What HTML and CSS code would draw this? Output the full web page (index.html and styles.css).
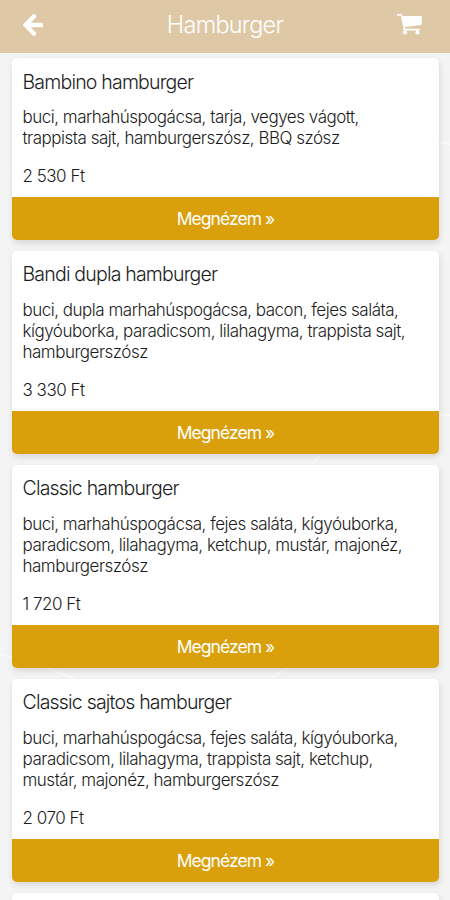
FILE: index.html
```
<!DOCTYPE html>
<html lang="hu">
<head>
<meta charset="utf-8">
<meta name="viewport" content="width=device-width, initial-scale=1">
<title>Hamburger</title>
<link rel="stylesheet" href="styles.css">
</head>
<body>
<header class="bar">
  <svg class="back" viewBox="0 0 20 22"><path d="M11 2.400 2.500 11l8.500 8.600M4 11h14.500" fill="none" stroke="#fff" stroke-width="4.400" stroke-linecap="round"/></svg>
  <h1>Hamburger</h1>
  <svg class="cart" viewBox="0 0 25 21"><path d="M.8 0H4q1 0 1.200.8l.2 1.200H24q.8 0 .8.8V10q0 .8-.8.900L8 13l.4 1.800H22q.8 0 .8.800t-.8.900H7.100q-1 0-1-.8l.4-1.500L3.800 1.800h-3Q0 1.700 0 .9T.8 0z" fill="#fff"/><circle cx="8" cy="18.400" r="2.100" fill="#fff"/><circle cx="20.500" cy="18.400" r="2.100" fill="#fff"/></svg>
</header>
<main class="list">
  <svg class="contours" viewBox="0 0 450 848" fill="none" stroke="#fafafa" stroke-width="2"><path d="M438 90q7-2 12 2M438 362h12M320 402l-10 12M45 614l30 12M290 614l-20 12M0 601l12 4"/></svg>
  <article class="card">
    <div class="body">
      <h2>Bambino hamburger</h2>
      <p>buci, marhahúspogácsa, tarja, vegyes vágott,<br>trappista sajt, hamburgerszósz, BBQ szósz</p>
      <div class="price">2 530 Ft</div>
    </div>
    <a class="more">Megnézem »</a>
  </article>
  <article class="card">
    <div class="body">
      <h2>Bandi dupla hamburger</h2>
      <p>buci, dupla marhahúspogácsa, bacon, fejes saláta,<br>kígyóuborka, paradicsom, lilahagyma, trappista sajt,<br>hamburgerszósz</p>
      <div class="price">3 330 Ft</div>
    </div>
    <a class="more">Megnézem »</a>
  </article>
  <article class="card">
    <div class="body">
      <h2>Classic hamburger</h2>
      <p>buci, marhahúspogácsa, fejes saláta, kígyóuborka,<br>paradicsom, lilahagyma, ketchup, mustár, majonéz,<br>hamburgerszósz</p>
      <div class="price">1 720 Ft</div>
    </div>
    <a class="more">Megnézem »</a>
  </article>
  <article class="card">
    <div class="body">
      <h2>Classic sajtos hamburger</h2>
      <p>buci, marhahúspogácsa, fejes saláta, kígyóuborka,<br>paradicsom, lilahagyma, trappista sajt, ketchup,<br>mustár, majonéz, hamburgerszósz</p>
      <div class="price">2 070 Ft</div>
    </div>
    <a class="more">Megnézem »</a>
  </article>
  <article class="card next"></article>
</main>
</body>
</html>
```
FILE: styles.css
```
* { box-sizing: border-box; }
body {
  margin: 0;
  height: 900px;
  overflow: hidden;
  background: #f4f4f5;
  color: #1c1c1c;
  font-family: Inter, "Open Sans", sans-serif;
  font-weight: 300;
}
h1, h2, p { margin: 0; font-weight: 300; }
.bar {
  height: 52.5px;
  padding: 0 28px 2px 23px;
  background: #dec8a6;
  display: grid;
  grid-template-columns: 26px 1fr 26px;
  align-items: center;
}
.bar h1 {
  padding-left: 5px;
  color: #fff;
  font-size: 23.5px;
  letter-spacing: -0.75px;
  line-height: 30px;
  text-align: center;
}
.back { width: 20px; height: 22px; }
.cart { width: 25px; height: 21px; margin-top: -2px; justify-self: end; }
.list {
  position: relative;
  padding: 5.5px 11px 0 12px;
  display: flex;
  flex-direction: column;
  gap: 11px;
}
.contours { position: absolute; left: 0; top: 0; width: 450px; height: 848px; }
.card {
  position: relative;
  flex: none;
  background: #fff;
  border-radius: 5px;
  overflow: hidden;
  box-shadow: 1px 3px 6px rgba(0, 0, 0, .12);
}
.body { padding: 10.6px 11px 10px 10.5px; }
.card h2 { font-size: 19.5px; line-height: 26px; letter-spacing: -0.8px; }
.card p { margin-top: 12.6px; font-size: 17px; line-height: 21.2px; letter-spacing: -0.49px; white-space: nowrap; }
.price { margin-top: 15.2px; font-size: 17px; line-height: 22px; letter-spacing: -0.5px; }
.more {
  display: block;
  height: 43px;
  background: #d9a00b;
  color: #fff;
  font-size: 17.5px;
  font-weight: 400;
  line-height: 43px;
  letter-spacing: -0.95px;
  text-align: center;
}
.next { height: 40px; }
```
